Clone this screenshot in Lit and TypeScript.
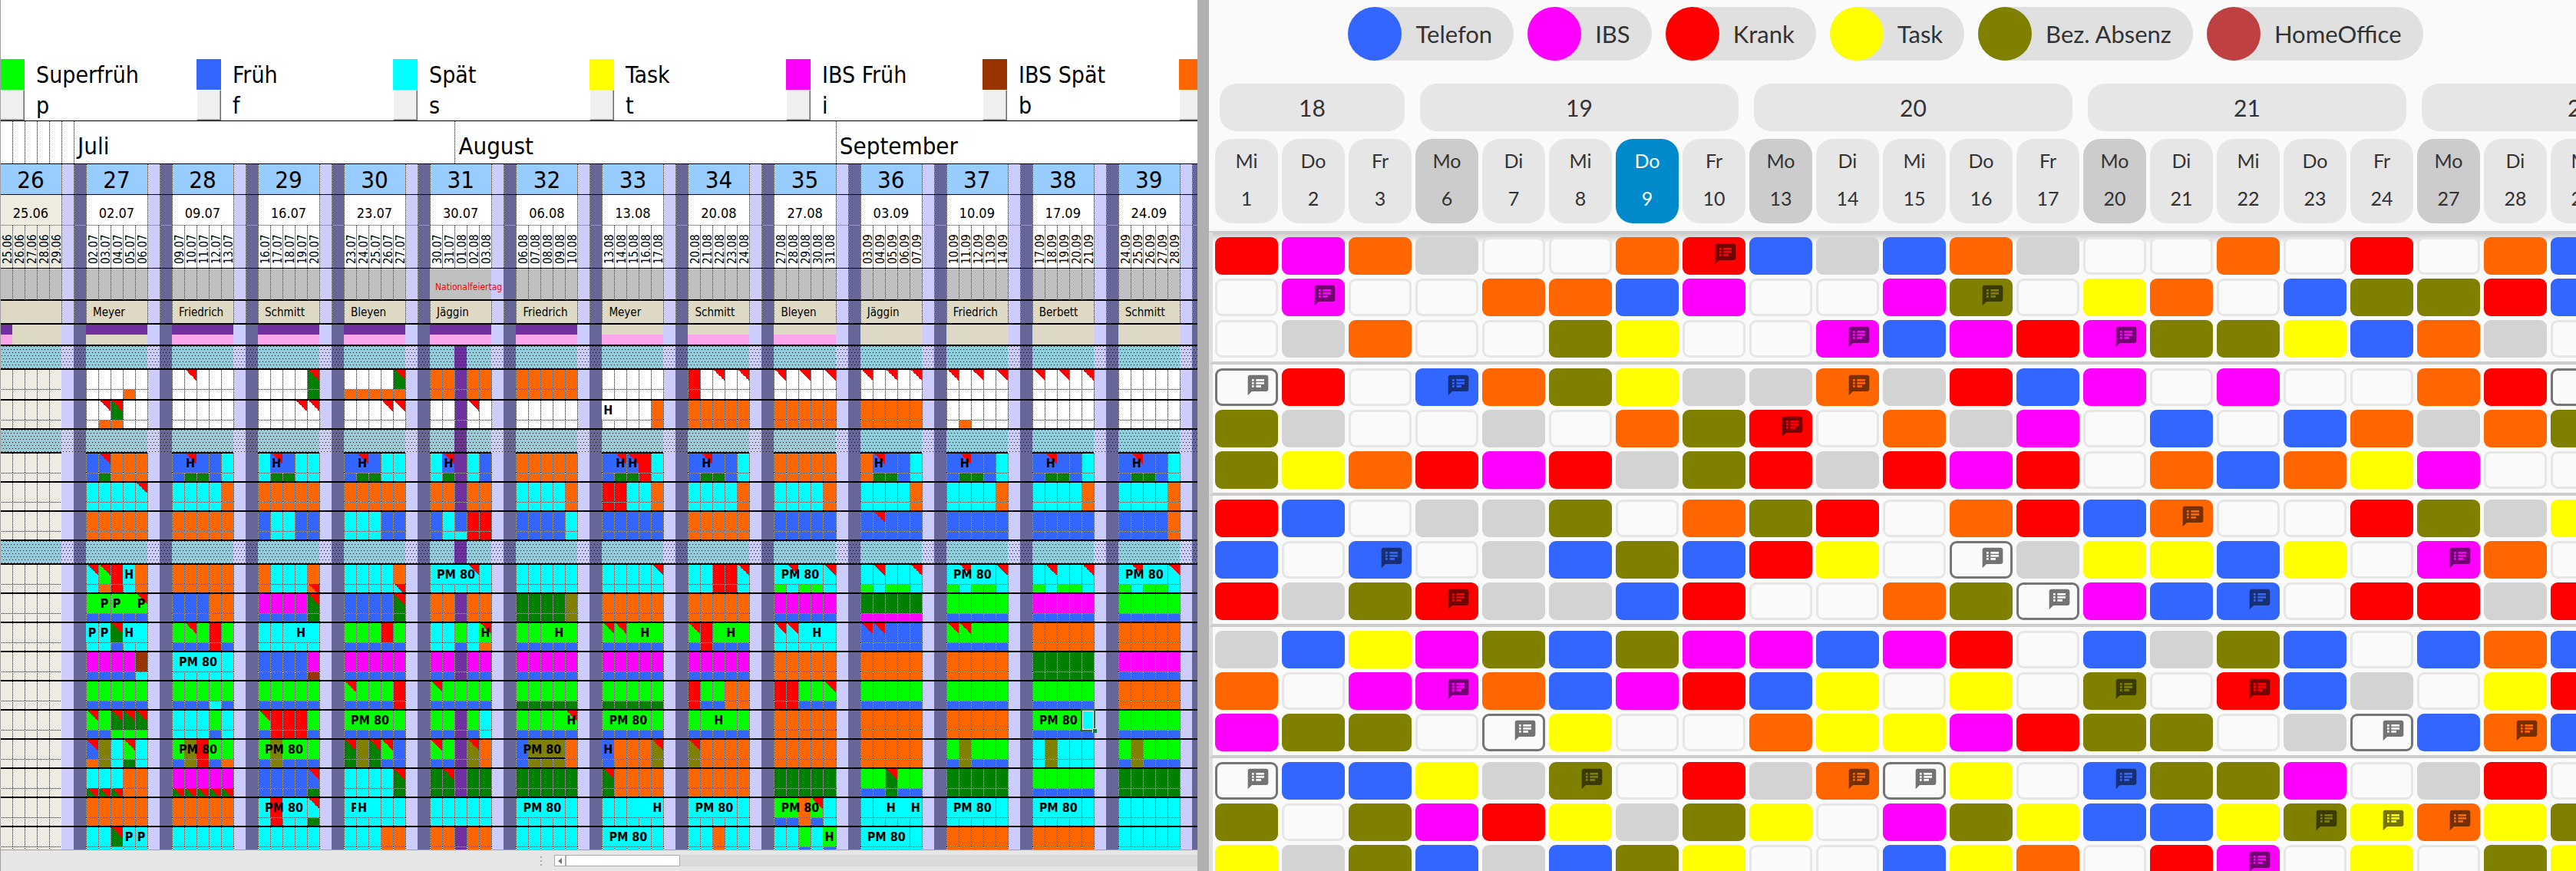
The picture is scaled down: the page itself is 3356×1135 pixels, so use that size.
import { LitElement, html, css, nothing } from "lit";
import { customElement } from "lit/decorators.js";

/* ---------- shift sheet data ---------- */

const WEEKS = [
  { no: 26, monday: [25, 6], name: "" },
  { no: 27, monday: [2, 7], name: "Meyer" },
  { no: 28, monday: [9, 7], name: "Friedrich" },
  { no: 29, monday: [16, 7], name: "Schmitt" },
  { no: 30, monday: [23, 7], name: "Bleyen" },
  { no: 31, monday: [30, 7], name: "Jäggin" },
  { no: 32, monday: [6, 8], name: "Friedrich" },
  { no: 33, monday: [13, 8], name: "Meyer" },
  { no: 34, monday: [20, 8], name: "Schmitt" },
  { no: 35, monday: [27, 8], name: "Bleyen" },
  { no: 36, monday: [3, 9], name: "Jäggin" },
  { no: 37, monday: [10, 9], name: "Friedrich" },
  { no: 38, monday: [17, 9], name: "Berbett" },
  { no: 39, monday: [24, 9], name: "Schmitt" },
];

const DAYS_IN: Record<number, number> = { 6: 30, 7: 31, 8: 31, 9: 30 };

const pad = (n: number) => String(n).padStart(2, "0");

function dateOf(monday: number[], offset: number): string {
  let [d, m] = monday;
  d += offset;
  if (d > DAYS_IN[m]) {
    d -= DAYS_IN[m];
    m += 1;
  }
  return `${pad(d)}.${pad(m)}`;
}

/*
 * One string per person, weeks 27 to 39 separated by "|".
 * A week: five shifts of the upper half, five of the lower half (left out if equal), then flags:
 *   t / u  comment corner in the upper / lower half     H / P / M  label at that day
 *   j      no grid line left of that day                k          rule under that day
 *   s      selected day
 */
const BLOCKS: string[][] = [
  [
    "wwwww wwwow|wwwww t1|wwwwg t4|wwwwg ooooo t4|oopoo|ooooo|wwwww|rwwww t24|wwwww t024|wwwww t024|wwwww t024|wwwww t024|wwwww",
    "wwgww wooww t12|wwwww|wwwww t34|wwwww t34|wwpww t3|wwwww|wwwwo H0 j01|ooooo|ooooo|ooooo|wwwww wowww|wwwww|wwwww",
  ],
  [
    "bbooo bgooo t1|bbbbc bggbc t1 H1 j12|cbbcc cggcc t1 H1 j12|bbbcc bggcc t1 H1 j12|cbpcb cgpcb t1 H1 j12|ooooo|bbbrc bggrc t12 H12 j13|bbbbc bggbc t1 H1 j12|ooooo|obbbc oggbc t1 H1 j12|bbbbc bggbc t1 H1 j12|bbbbc bggbc t1 H1 j12|bbbbc bggbc t1 H1 j12",
    "ccccc t4|cccco|ooooo|ooooo|oopoo|cccco|rrcco|cccco|cccco|cccco|cccco|cccco|cccco",
    "ooooo|ooooo|bccbb|cccbb|bcbrr bccrr|bbbbc|bbbbb|ooooo|bbbbb|bbbbb t1|bbbbb|bbbbb|bbbbo",
  ],
  [
    "clrco corco t01 H3 j34|ooooo|occco u4|cccco ccccc u4|ccccc M0 t3 j123|ccccc|ccccc t4|ccrrc t4|ccccc lcllc M0 t14 j123|ccccc lcllc t14|ccccc lcllc M0 t14 j123|ccccc lcllc t14|ccccc lcllc M0 t14 j123",
    "lllll bbbbb P124 t4 j134|bbboo|mmmmg bbbbg t4|bbbbg t4|oopoo|ggggv|ooooo|ooooo|mmmmm bbbbb|ggggg mmmmm|lllll bbbbb|mmmmm bbbbb|lllll bbbbb",
    "ccgcc ccbcc P01 H3 t2 j0234|lllrl bbbrb t1|ccccc H3 j34|lllrl bbbbb|cclcl ccbco t4 H4 j4|lllll bbbbb H3 j34|lllll bbbbb t01 H3 j34|lrlll brbbb t0 H3 j34|ccccc t01 H3 j34|bbbbb t01|lllll bbbbb t01|ooooo|ooooo",
    "mmmmn bbbbc|ccccc M0 j123|bbbbm bbbbn|mmmmm bbbbb|mmpmm bbpbb|mmmmm bbbbb|mmmmm bbbbb|mmmmm bbbbb|ooooo|ooooo|ooooo|ggggg|mmmmm bbbbb",
    "lllll bbbbb|lllll bbbcb|lllll bbbbb|llllr bbbbr t0|lllll bbbbb t0|lllll ggggg|lllll ggggg|rlloo rbboo|rrlll rrbbb t4|lllll bbbbb|lllll bbbbb|lllll bbbbb|ooooo",
    "llggg bblll t0234|ccclc cccbc|lrrrl brrrb t0|lllll bbbbb M0 j123|llplc bbpbc|lllll bbbbb H4 t4 j4|lllll bbbbb M0 j123|lllll bbbbb H2 j23|ooooo|ooooo|ooooo|llllc bbbbb M0 s4 j123|lllll bbbbb",
    "bvclc ovcgc t03|lvrll bvrbo M0 j123|lvlll bvbbb M0 j123|gvglb gvgbb t023|llpvo bbpvo t03|bvvvo M0 j123 k123|booov t4 H0 j01|voooo t0|ooooo|ooooo|lvlll bvbbb|cvccc|lvlll bvbbb",
    "cccoo gggoo u012|mmmmm ggggg u01234|bbbbb bbbbg t4|ccccg t4|ggpgg t1|ggggg|goooo t0|ooooo|ggggg|llgll bbgbb t2|ggggg|lllll bbbbb|ggggg",
    "ooooo|ooooo|crccc crccg M0 t4 j123|ccccc M0 H1 j12|ccccc|ccccc M0 j123|ccccc H4 j34|ccccc M0 j123|llolc bbobc M0 t3 j123|ccccc H24 j234|ccccc M0 j123|ccccc M0 j123|ccccc",
    "ccgcc ccccc t2 P34 j3|ccccc|ccccc|cccoo|oopoo|ccccc|ccccc M0 j123|ccocc|cclcl ccbcb H4 j4|ccccc M0 j123|ooooo|ooooo|ccccc",
  ],
];

const SHEET_LEGEND = [
  { tone: "l", label: "Superfrüh", key: "p" },
  { tone: "b", label: "Früh", key: "f" },
  { tone: "c", label: "Spät", key: "s" },
  { tone: "y", label: "Task", key: "t" },
  { tone: "m", label: "IBS Früh", key: "i" },
  { tone: "n", label: "IBS Spät", key: "b" },
  { tone: "o", label: "", key: "" },
];

interface Week {
  top: string;
  bottom: string;
  flags: Record<string, string>;
}

function parseWeek(src: string): Week {
  const parts = src.split(" ");
  const top = parts.shift()!;
  const bottom = parts.length && /^[a-z]{5}$/.test(parts[0]) ? parts.shift()! : top;
  const flags: Record<string, string> = {};
  for (const p of parts) flags[p[0]] = p.slice(1);
  return { top, bottom, flags };
}

@customElement("shift-sheet")
export class ShiftSheet extends LitElement {
  static styles = css`
    :host {
      display: flex;
      flex-direction: column;
      position: relative;
      min-width: 0;
      overflow: hidden;
      background: #fff;
      color: #000;
      font-family: "DejaVu Sans Condensed", "DejaVu Sans", sans-serif;
    }
    :host::before {
      content: "";
      position: absolute;
      inset: 0 auto 0 0;
      width: 1px;
      background: #a0a0a0;
      z-index: 2;
    }
    .view {
      flex: 1;
      min-height: 0;
      overflow: hidden;
    }
    .legend {
      display: flex;
      margin: 0;
      padding: 77px 0 0;
      list-style: none;
      border-bottom: 1px solid #000;
    }
    .entry {
      flex: 0 0 256px;
      display: grid;
      grid-template-columns: 32px 1fr;
      grid-template-rows: 40px 40px;
      column-gap: 15px;
      font-size: 30px;
      line-height: 42px;
    }
    .key {
      margin: 0;
      padding: 0;
      border: 1px solid;
      border-color: #fff #6d6d6d #6d6d6d #fff;
      box-shadow: inset -1px -1px #a8a8a8;
      background: #f0f0f0;
    }
    .plan {
      table-layout: fixed;
      width: 1568px;
      border-spacing: 0;
    }
    col {
      width: 16px;
    }
    th,
    td {
      box-sizing: border-box;
      padding: 0;
      font-weight: normal;
      white-space: nowrap;
      background-image: var(--corner, none), var(--dots-a, none), var(--dots-b, none), var(--line-x, none),
        var(--line-y, none);
      background-position: 100% 0, 0 0, 2px 4px, 0 0, 0 0;
      background-size: 14px 14px, 4px 8px, 4px 8px, 2px 1px, 1px 2px;
      background-repeat: no-repeat, repeat, repeat, repeat-x, repeat-y;
    }
    .ly {
      --line-y: linear-gradient(#000 50%, #fff 50%);
    }
    .lx {
      --line-x: linear-gradient(90deg, #000 50%, #fff 50%);
    }
    .corner {
      --corner: linear-gradient(to top right, transparent 50%, #f00 50%);
    }
    .dots {
      --dots-a: conic-gradient(at 1px 1px, transparent 75%, #000 75%);
      --dots-b: conic-gradient(at 1px 1px, transparent 75%, #000 75%);
    }
    .months th {
      height: 56px;
      border-bottom: 1px solid #000;
      padding: 8px 0 0 5px;
      font-size: 31px;
      line-height: 40px;
      text-align: left;
    }
    .numbers th,
    .numbers td {
      height: 40px;
      border-bottom: 1px solid #000;
      font-size: 31px;
      line-height: 38px;
    }
    .starts th,
    .starts td {
      height: 40px;
      border-bottom: 1px solid #999;
      padding-top: 8px;
      font-size: 18px;
      line-height: 28px;
    }
    .dates th,
    .dates td {
      height: 56px;
      border-bottom: 1px solid #000;
      vertical-align: bottom;
    }
    .upright {
      display: block;
      height: 48px;
      width: 16px;
      padding-right: 2px;
      box-sizing: border-box;
      writing-mode: vertical-rl;
      transform: rotate(180deg);
      font-size: 15px;
      line-height: 16px;
    }
    .notes td {
      height: 42px;
      border-bottom: 2px solid #000;
    }
    .holiday {
      padding: 8px 0 0 7px;
      font-size: 12px;
      line-height: 24px;
      color: #f00;
    }
    .names td {
      height: 31px;
      border-bottom: 2px solid #000;
      font-size: 15px;
      line-height: 28px;
    }
    .who {
      padding-left: 9px;
    }
    .bar td {
      height: 13px;
    }
    .bar.last td {
      height: 15px;
      border-bottom: 2px solid #000;
    }
    .group td {
      height: 31px;
      border-bottom: 2px solid #000;
    }
    .group .open {
      border-bottom: 0;
    }
    .upper td {
      height: 25px;
      font-size: 16px;
      font-weight: bold;
      line-height: 25px;
      text-align: center;
      vertical-align: top;
    }
    .lower td {
      height: 13px;
      border-bottom: 2px solid #000;
    }
    .lower.tall td {
      height: 15px;
    }
    .upper .wide {
      padding-left: 9px;
      text-align: left;
    }
    .upper .clip {
      overflow: hidden;
    }
    .upper .rule {
      border-bottom: 2px solid #000;
    }
    .selected {
      position: relative;
    }
    .marker {
      position: absolute;
      inset: -2px -2px -2px -1px;
      border: 2px solid #217346;
      box-shadow: inset 0 0 0 1px #fff;
    }
    .marker::after {
      content: "";
      position: absolute;
      right: -4px;
      bottom: -4px;
      width: 5px;
      height: 5px;
      background: #217346;
      border: solid #fff;
      border-width: 1px 0 0 1px;
    }
    .c-o { background-color: #ff6600; }
    .c-b { background-color: #3366ff; }
    .c-c { background-color: #00ffff; }
    .c-l { background-color: #00ff00; }
    .c-g { background-color: #008000; }
    .c-r { background-color: #ff0000; }
    .c-m { background-color: #ff00ff; }
    .c-v { background-color: #808000; }
    .c-n { background-color: #993300; }
    .c-y { background-color: #ffff00; }
    .c-w { background-color: #ffffff; }
    .c-p { background-color: #7030a0; }
    .c-e { background-color: #eeece1; }
    .c-k { background-color: #fba5ea; }
    .c-s { background-color: #ddd9c4; }
    .c-sat { background-color: #ccccff; }
    .c-sun { background-color: #666699; }
    .c-no { background-color: #99ccff; }
    .c-grey { background-color: #c0c0c0; }
    .c-team { background-color: #92cddc; }
    .foot {
      display: flex;
      flex: 0 0 27px;
      align-items: center;
      border-top: 1px solid #a0a0a0;
      background: #e6e6e6;
    }
    .tabs {
      flex: 704 1 0;
    }
    .grip {
      display: grid;
      gap: 3px;
      margin-right: 16px;
    }
    .grip i {
      width: 2px;
      height: 2px;
      background: #ababab;
    }
    .scroll {
      flex: 838 1 0;
      display: flex;
      height: 15px;
      background: #dadada;
    }
    .step {
      display: grid;
      place-items: center;
      width: 15px;
      padding: 0;
      border: 1px solid #ababab;
      background: #fff;
    }
    .thumb {
      width: 149px;
      padding: 0;
      border: 1px solid #ababab;
      background: #fff;
    }
  `;

  private weekend(extra = "", lines = "") {
    return html`<td class="c-sat ${extra} ${lines}"></td>
      <td class="c-sun ${extra} ${lines}"></td>`;
  }

  private half(weeks: Week[], part: "top" | "bottom") {
    const upper = part === "top";
    const out: unknown[] = [];
    weeks.forEach((w, wi) => {
      const f = w.flags;
      for (let d = 0; d < 5; d++) {
        const has = (k: string) => (f[k] ?? "").includes(String(d));
        const cls = ["c-" + w[part][d]];
        if (!(upper && has("j")) && !(wi === 0 && d === 0)) cls.push("ly");
        if (!upper) cls.push("lx");
        if (has(upper ? "t" : "u")) cls.push("corner");
        let text = "";
        if (upper) {
          if (has("H")) text = "H";
          if (has("P")) text = "P";
          if (has("M")) {
            text = f.H ? "P" : "PM 80";
            cls.push("wide");
            if (f.H) cls.push("clip");
          }
          if (has("k")) cls.push("rule");
          if (has("s")) cls.push("selected");
        }
        out.push(html`<td class=${cls.join(" ")}>${text}${upper && has("s") ? html`<span class="marker"></span>` : nothing}</td>`);
      }
      out.push(html`<td class="c-sat ${wi ? "ly" : ""}"></td><td class="c-sun"></td>`);
    });
    return out;
  }

  private person(src: string, tall: boolean) {
    const weeks = [parseWeek("eeeee"), ...src.split("|").map(parseWeek)];
    return html`<tr class="upper">${this.half(weeks, "top")}</tr>
      <tr class="lower ${tall ? "tall" : ""}">${this.half(weeks, "bottom")}</tr>`;
  }

  private team(open: boolean) {
    return html`<tr class="group">
      ${WEEKS.map(
        (w) => html`${[0, 1, 2, 3, 4].map(
          (d) => html`<td class="dots ${w.no === 31 && d === 2 ? "c-p" : "c-team"}"></td>`
        )}${this.weekend(open ? "dots open" : "dots")}`
      )}
    </tr>`;
  }

  private barTone(no: number, d: number, second: boolean): string {
    if (no === 26) return d ? "c-s" : second ? "c-k" : "c-p";
    if (second) return no >= 28 && no <= 35 ? "c-k" : "c-s";
    return no <= 32 ? "c-p" : "c-s";
  }

  private bar(second: boolean) {
    return html`<tr class="bar ${second ? "last" : ""}">
      ${WEEKS.map(
        (w) => html`${[0, 1, 2, 3, 4].map((d) => html`<td class=${this.barTone(w.no, d, second)}></td>`)}${this.weekend()}`
      )}
    </tr>`;
  }

  render() {
    return html`
      <div class="view">
        <ul class="legend">
          ${SHEET_LEGEND.map(
            (e) => html`<li class="entry">
              <span class="c-${e.tone}"></span><span>${e.label}</span>
              <button class="key" aria-label=${e.label || "Weitere"}></button><span>${e.key}</span>
            </li>`
          )}
        </ul>
        <table class="plan">
          <colgroup>${Array.from({ length: 98 }, () => html`<col />`)}</colgroup>
          <thead>
            <tr class="months">
              ${[0, 1, 2, 3, 4, 5].map((i) => html`<th class=${i ? "ly" : ""}></th>`)}
              <th class="ly" colspan="31">Juli</th>
              <th class="ly" colspan="31">August</th>
              <th class="ly" colspan="30">September</th>
            </tr>
            <tr class="numbers">
              ${WEEKS.map((w) => html`<th class="c-no ly" colspan="5">${w.no}</th>${this.weekend("", "ly")}`)}
            </tr>
            <tr class="starts">
              ${WEEKS.map(
                (w) => html`<th class="ly ${w.name ? "" : "c-e"}" colspan="5">${dateOf(w.monday, 0)}</th>${this.weekend("", "ly")}`
              )}
            </tr>
            <tr class="dates">
              ${WEEKS.map(
                (w) => html`${[0, 1, 2, 3, 4].map(
                  (d) => html`<th class="ly ${w.name ? "" : "c-e"}"><span class="upright">${dateOf(w.monday, d)}</span></th>`
                )}${this.weekend("", "ly")}`
              )}
            </tr>
          </thead>
          <tbody>
            <tr class="notes">
              ${WEEKS.map(
                (w) => html`${w.no === 31
                  ? html`<td class="c-grey holiday" colspan="5">Nationalfeiertag</td>${this.weekend()}`
                  : html`${[0, 1, 2, 3, 4].map(() => html`<td class="c-grey ly"></td>`)}${this.weekend("", "ly")}`}`
              )}
            </tr>
            <tr class="names">
              ${WEEKS.map((w) => html`<td class="c-s ly who" colspan="5">${w.name}</td>${this.weekend("", "ly")}`)}
            </tr>
            ${this.bar(false)} ${this.bar(true)}
            ${BLOCKS.map(
              (people, i) => html`${this.team(i === 1)}${people.map((p, j) => this.person(p, i === 0 && j === 0))}`
            )}
          </tbody>
        </table>
      </div>
      <div class="foot">
        <div class="tabs"></div>
        <div class="grip"><i></i><i></i><i></i></div>
        <div class="scroll">
          <button class="step" aria-label="Nach links">
            <svg width="5" height="8" viewBox="0 0 5 8"><path d="M5 0v8L0 4z" fill="#777" /></svg>
          </button>
          <button class="thumb" aria-label="Bildlauf"></button>
        </div>
      </div>
    `;
  }
}

/* ---------- absence calendar data ---------- */

const CAL_LEGEND = [
  { tone: "b", label: "Telefon" },
  { tone: "m", label: "IBS" },
  { tone: "r", label: "Krank" },
  { tone: "y", label: "Task" },
  { tone: "v", label: "Bez. Absenz" },
  { tone: "h", label: "HomeOffice" },
];

const CAL_DAYS = [1, 2, 3, 6, 7, 8, 9, 10, 13, 14, 15, 16, 17, 20, 21, 22, 23, 24, 27, 28, 29, 30, 31];
const DAY_NAMES = ["Mo", "Di", "Mi", "Do", "Fr"];
const CAL_WEEKS = [18, 19, 20, 21, 22];
const TODAY = 9;

/* One letter per day; a capital letter is a day with a note. */
const TEAMS = [
  ["rmogwwoRbgbogwwowrwob", "wMwwoobmwwmVwyowbvvrb", "wgowwvywwMbmrMvvybogw"],
  ["WrwBovyggOgrbmwmwworW", "vgwwgwovRwogmwbwbogov", "vyormrgvrgrmrwoboymww"],
  ["rbwggvwovrworbOwwrvgy", "bwBwgbvbrywWgyybywMow", "rgvRggbrwwovWmbBwrrgr"],
  ["gbymvbvmmbmrwbgvbwbob", "owmMobmrbywywVwRbgwyr", "mvvwWywwoyymrvvwgWbOb"],
  ["WbbygVwrgOWywBvvmwgrw", "vwvmrygvywmvybbyVYOyv", "ygvbgbvywwbyowrMwywvy"],
];

@customElement("absence-calendar")
export class AbsenceCalendar extends LitElement {
  static styles = css`
    :host {
      display: flex;
      flex-direction: column;
      min-width: 0;
      overflow: hidden;
      background: #fafafa;
      color: #333;
      font-family: Lato, "Open Sans", sans-serif;
    }
    .legend {
      display: flex;
      flex-wrap: wrap;
      justify-content: center;
      margin: 0;
      padding: 9px 0 26px;
      list-style: none;
    }
    .chip {
      display: flex;
      align-items: center;
      gap: 18px;
      height: 70px;
      margin-right: 18px;
      padding-right: 28px;
      border-radius: 35px;
      background: #e0e0e0;
      font-size: 31px;
      line-height: 70px;
    }
    .dot {
      width: 70px;
      height: 70px;
      border-radius: 50%;
    }
    .cal,
    .cal thead,
    .cal tbody {
      display: block;
    }
    .cal tr {
      display: grid;
      grid-template-columns: repeat(23, 82px);
      column-gap: 5px;
      padding-left: 8px;
    }
    .head {
      padding: 4px 0 10px;
      border-bottom: 2px solid #ccc;
    }
    .cal th {
      padding: 0;
      font-weight: normal;
    }
    .week {
      grid-column: span 5;
      margin: 0 9px 10px 6px;
      border-radius: 22px;
      background: #e6e6e6;
      font-size: 30px;
      line-height: 62px;
    }
    .week.short {
      grid-column: span 3;
    }
    .day {
      box-sizing: border-box;
      display: grid;
      grid-template-rows: 49px 49px;
      height: 110px;
      border-radius: 22px;
      background: #e6e6e6;
      font-size: 25px;
      line-height: 49px;
    }
    .cal .day {
      padding-top: 4px;
    }
    .day.monday {
      background: #ccc;
    }
    .day.today {
      background: #008acb;
      color: #fff;
    }
    .team {
      padding: 5px 0;
      border-left: 5px solid #dedede;
      border-bottom: 4px solid #ccc;
    }
    .team.first {
      padding-top: 6px;
      background: linear-gradient(rgba(0, 0, 0, 0.2), rgba(0, 0, 0, 0) 14px);
    }
    .team tr {
      padding-left: 3px;
    }
    .team tr + tr {
      margin-top: 5px;
    }
    .team td {
      box-sizing: border-box;
      height: 49px;
      padding: 6px 10px 0 0;
      border-radius: 9px;
      text-align: right;
    }
    .team .t-w {
      padding: 3px 7px 0 0;
      border: 3px solid #e6e6e6;
      background: #fafafa;
    }
    .team .t-w.noted {
      border-color: #757575;
    }
    .note {
      display: block;
      width: 32px;
      height: 32px;
      margin-left: auto;
      fill: rgba(0, 0, 0, 0.54);
    }
    .t-r { background: #ff0000; }
    .t-m { background: #ff00ff; }
    .t-o { background: #ff6600; }
    .t-g { background: #d3d3d3; }
    .t-b { background: #3366ff; }
    .t-v { background: #808000; }
    .t-y { background: #ffff00; }
    .t-h { background: #bf4040; }
  `;

  private note() {
    return html`<svg class="note" viewBox="0 0 24 24" role="img" aria-label="Notiz">
      <path
        d="M20 2H4c-1.1 0-1.99.9-1.99 2L2 22l4-4h14c1.1 0 2-.9 2-2V4c0-1.1-.9-2-2-2zM8 14H6v-2h2v2zm0-3H6V9h2v2zm0-3H6V6h2v2zm7 6h-5v-2h5v2zm3-3h-8V9h8v2zm0-3h-8V6h8v2z"
      />
    </svg>`;
  }

  render() {
    return html`
      <ul class="legend">
        ${CAL_LEGEND.map((e) => html`<li class="chip"><span class="dot t-${e.tone}"></span>${e.label}</li>`)}
      </ul>
      <table class="cal">
        <thead class="head">
          <tr>
            ${CAL_WEEKS.map((w, i) => html`<th class="week ${i ? "" : "short"}" colspan=${i ? 5 : 3}>${w}</th>`)}
          </tr>
          <tr>
            ${CAL_DAYS.map((d, i) => {
              const name = DAY_NAMES[(i + 2) % 5];
              return html`<th class="day ${name === "Mo" ? "monday" : ""} ${d === TODAY ? "today" : ""}">
                <span>${name}</span><span>${d}</span>
              </th>`;
            })}
          </tr>
        </thead>
        ${TEAMS.map(
          (rows, i) => html`<tbody class="team ${i ? "" : "first"}">
            ${rows.map(
              (row) => html`<tr>
                ${[...row].map((c) => {
                  const noted = c !== c.toLowerCase();
                  return html`<td class="t-${c.toLowerCase()} ${noted ? "noted" : ""}">${noted ? this.note() : nothing}</td>`;
                })}
              </tr>`
            )}
          </tbody>`
        )}
      </table>
    `;
  }
}

@customElement("app-root")
export class AppRoot extends LitElement {
  static styles = css`
    :host {
      display: flex;
      height: 100vh;
      overflow: hidden;
      background: #b0b0b0;
    }
    .sheet {
      flex: 1560 1 0;
    }
    .calendar {
      flex: 1781 1 0;
      margin-left: 15px;
    }
  `;

  render() {
    return html`<shift-sheet class="sheet"></shift-sheet><absence-calendar class="calendar"></absence-calendar>`;
  }
}
